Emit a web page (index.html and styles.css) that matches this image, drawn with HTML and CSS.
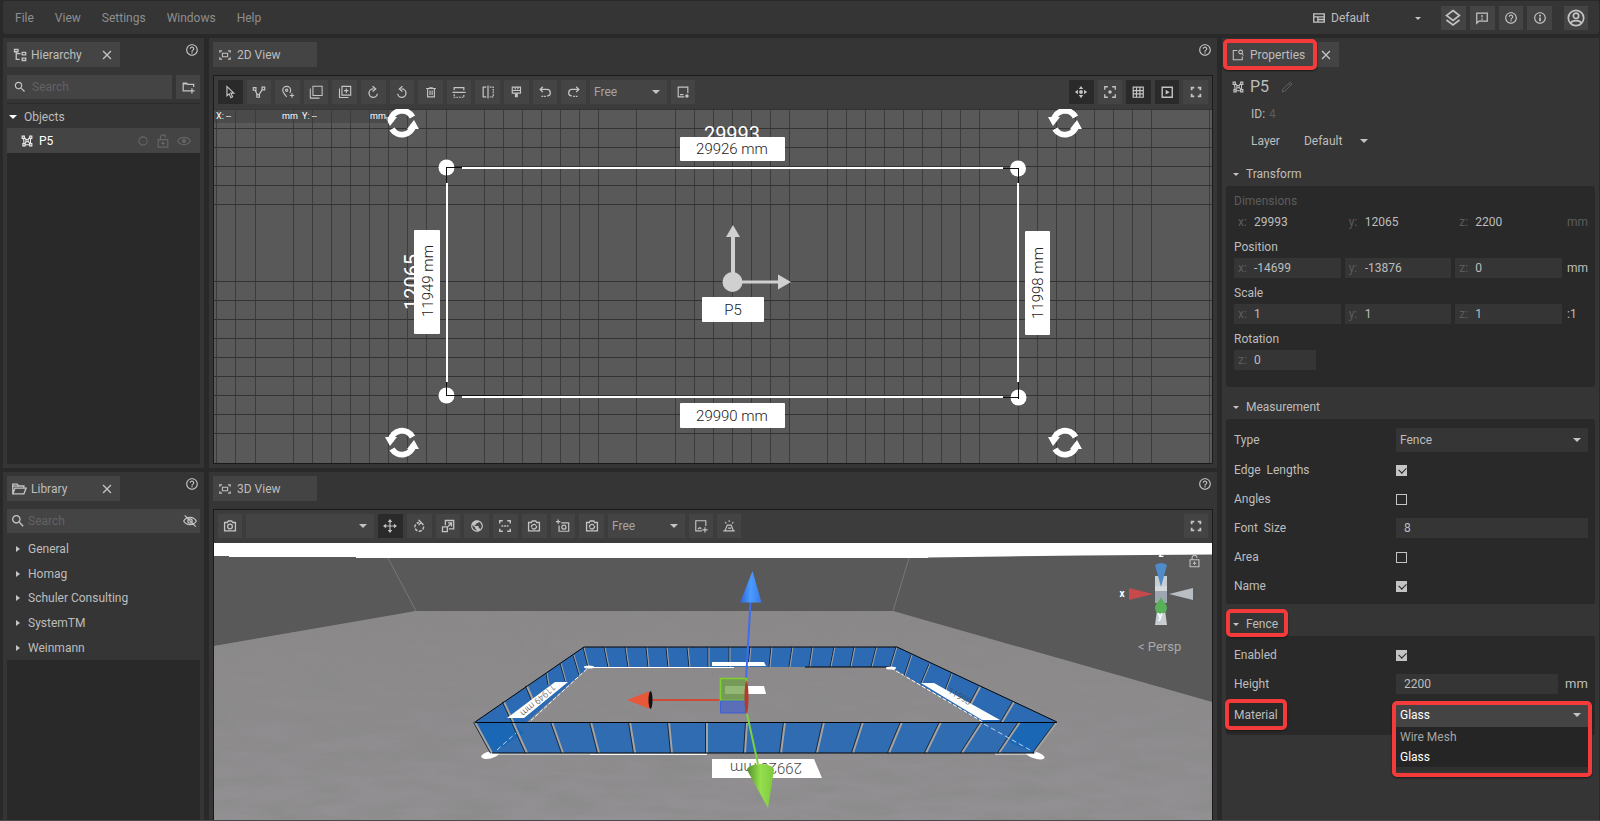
FILE: index.html
```html
<!DOCTYPE html>
<html lang="en">
<head>
<meta charset="utf-8">
<title>Layout Planner</title>
<link rel="stylesheet" href="styles.css">
</head>
<body>
<svg class="sprite" aria-hidden="true">
  <symbol id="i-help" viewBox="0 0 24 24"><path fill="currentColor" d="M11 18h2v-2h-2v2zm1-16C6.480 2 2 6.480 2 12s4.480 10 10 10 10-4.480 10-10S17.520 2 12 2zm0 18c-4.410 0-8-3.590-8-8s3.590-8 8-8 8 3.590 8 8-3.590 8-8 8zm0-14c-2.210 0-4 1.790-4 4h2c0-1.100.9-2 2-2s2 .9 2 2c0 2-3 1.750-3 5h2c0-2.250 3-2.500 3-5 0-2.210-1.790-4-4-4z"/></symbol>
  <symbol id="i-info" viewBox="0 0 24 24"><path fill="currentColor" d="M10.500 6.500h3v3h-3zm0 4.500h3v6.500h-3zM12 2C6.480 2 2 6.480 2 12s4.480 10 10 10 10-4.480 10-10S17.520 2 12 2zm0 18c-4.410 0-8-3.590-8-8s3.590-8 8-8 8 3.590 8 8-3.590 8-8 8z"/></symbol>
  <symbol id="i-search" viewBox="0 0 24 24"><path fill="currentColor" d="M15.500 14h-.79l-.28-.27C15.410 12.590 16 11.110 16 9.500 16 5.910 13.090 3 9.500 3S3 5.910 3 9.500 5.910 16 9.500 16c1.610 0 3.090-.59 4.230-1.570l.27.28v.79l5 4.990L20.490 19l-4.990-5zm-6 0C7.010 14 5 11.990 5 9.500S7.010 5 9.500 5 14 7.010 14 9.500 11.990 14 9.500 14z"/></symbol>
  <symbol id="i-globe" viewBox="0 0 24 24"><path fill="currentColor" d="M12 2C6.480 2 2 6.480 2 12s4.480 10 10 10 10-4.480 10-10S17.520 2 12 2zm-1 17.930c-3.950-.49-7-3.850-7-7.930 0-.62.08-1.210.21-1.790L9 15v1c0 1.100.9 2 2 2v1.930zm6.900-2.540c-.26-.81-1-1.390-1.900-1.390h-1v-3c0-.55-.45-1-1-1H8v-2h2c.55 0 1-.45 1-1V7h2c1.100 0 2-.9 2-2v-.41c2.930 1.190 5 4.060 5 7.410 0 2.080-.8 3.970-2.100 5.390z"/></symbol>
  <symbol id="i-full" viewBox="0 0 16 16"><path fill="none" stroke="currentColor" stroke-width="2" d="M3 6V3h3M10 3h3v3M13 10v3h-3M6 13H3v-3"/></symbol>
  <symbol id="i-close" viewBox="0 0 16 16"><path fill="none" stroke="currentColor" stroke-width="1.500" d="M3.500 3.500l9 9M12.500 3.500l-9 9"/></symbol>
  <symbol id="i-tree" viewBox="0 0 16 16"><g fill="none" stroke="currentColor" stroke-width="1.500"><path d="M1.700 1.700h4v2.600h-4zM10.500 5h4v2.800h-4zM10.500 11.500h4v2.800h-4zM3.700 4.500V13h4M3.700 6.500h5"/></g></symbol>
  <symbol id="i-view" viewBox="0 0 16 16"><g fill="none" stroke="currentColor" stroke-width="1.400"><path d="M1 5V2.500h3M12 2.500h3V5M15 11v2.500h-3M4 13.500H1V11M4.500 5.700h7v4.600h-7z"/></g></symbol>
  <symbol id="i-folder" viewBox="0 0 18 16"><path fill="none" stroke="currentColor" stroke-width="1.500" d="M2 13V2.500h5l1.500 2h6V7M2 13.500L4.500 7H17l-2.500 6.500zM2 4.700h12"/></symbol>
  <symbol id="i-addfolder" viewBox="0 0 16 16"><path fill="none" stroke="currentColor" stroke-width="1.400" d="M9.500 12.500H2.500V3.500h4l1 1.500h7V8M12.500 9.500v6M9.500 12.500h6M2.500 4.500h5"/></symbol>
  <symbol id="i-poly" viewBox="0 0 16 16"><g fill="none" stroke="currentColor" stroke-width="1.400"><path d="M1.500 1.500h3v3h-3zM11.500 1.500h3v3h-3zM2.500 11.500h3v3h-3zM11.500 11.500h3v3h-3zM6.500 6h3v3h-3zM3.500 4.500l.5 7M12.700 4.500v7M5.500 13h6M4.500 3.500l2.500 2.700M11.500 3.500L9 6.200M5 12l2-3M12 11.500L9.500 8.500"/></g></symbol>
  <symbol id="i-props" viewBox="0 0 16 16"><g fill="none" stroke="currentColor" stroke-width="1.400"><path d="M7 2H1.700v12.300h12V10"/><circle cx="11.500" cy="4" r="2.500"/><path d="M13 6l2.300 2.700"/></g></symbol>
  <symbol id="i-pencil" viewBox="0 0 16 16"><path fill="none" stroke="currentColor" stroke-width="1.200" d="M1.500 14.500l1-3.500L12 1.500 14.500 4 5 13.500zM10 3.500L12.500 6"/></symbol>
  <symbol id="i-circle" viewBox="0 0 16 16"><circle cx="8" cy="8" r="5.500" fill="none" stroke="currentColor" stroke-width="1.400"/></symbol>
  <symbol id="i-lock" viewBox="0 0 16 16"><path fill="none" stroke="currentColor" stroke-width="1.300" d="M2.500 6.500h11v8.500h-11zM5 6.500V4a3 3 0 016 0M8 8.700v4M6 10.700h4"/></symbol>
  <symbol id="i-eye" viewBox="0 0 16 16"><g fill="none" stroke="currentColor" stroke-width="1.200"><path d="M.7 8C4 2.500 12 2.500 15.300 8 12 13.500 4 13.500.7 8z"/></g><circle cx="8" cy="8" r="2.400" fill="currentColor"/></symbol>
  <symbol id="i-eyeoff" viewBox="0 0 16 16"><g fill="none" stroke="currentColor" stroke-width="1.400"><path d="M.8 8C4 2.500 12 2.500 15.200 8 12 13.500 4 13.500.8 8zM2 1.500l12.500 13"/><circle cx="8" cy="8" r="2.500"/></g></symbol>
  <symbol id="i-layout" viewBox="0 0 16 16"><path fill="none" stroke="currentColor" stroke-width="1.800" d="M1 2.500h14v11H1zM1 6.500h14M6.500 6.500v7M6.500 10h8.500"/></symbol>
  <symbol id="i-layers" viewBox="0 0 18 18"><path fill="none" stroke="currentColor" stroke-width="1.600" d="M9 1.500l6.500 5L9 11.500l-6.500-5zM2.500 11L9 16l6.500-5"/></symbol>
  <symbol id="i-note" viewBox="0 0 16 16"><path fill="none" stroke="currentColor" stroke-width="1.400" d="M2 14V2.500h12v9H4.500zM8 4.500v2.800M8 8.700v1.500"/></symbol>
  <symbol id="i-user" viewBox="0 0 18 18"><g fill="none" stroke="currentColor" stroke-width="1.700"><circle cx="9" cy="9" r="7.700"/><circle cx="9" cy="6.800" r="2.700"/><path d="M3.500 14c2-3.300 9-3.300 11 0"/></g></symbol>
  <symbol id="i-cursor" viewBox="0 0 16 16"><path fill="none" stroke="currentColor" stroke-width="1.300" d="M4.500 1.800v10.500l2.600-2.200 1.900 4.400 2-1-2-4.200h3.400z"/></symbol>
  <symbol id="i-nodes" viewBox="0 0 16 16"><path fill="none" stroke="currentColor" stroke-width="1.400" d="M1.500 3h3v3h-3zM11.500 2.500h3v3h-3zM5.500 11h3v3h-3zM3.700 6l2.300 5M11.700 5.300L8 11"/></symbol>
  <symbol id="i-pin" viewBox="0 0 16 16"><g fill="none" stroke="currentColor" stroke-width="1.300"><path d="M6.500 13.500C4 10.500 2 8.500 2 6a4.500 4.500 0 019 0c0 1-.4 2-1 3M12.500 9.500v5M10 12h5"/><circle cx="6.500" cy="6" r="1.300"/></g></symbol>
  <symbol id="i-copy" viewBox="0 0 16 16"><path fill="none" stroke="currentColor" stroke-width="1.200" d="M4.500 1.500h10.500v10.500H4.500zM1.500 4v11h10.500"/></symbol>
  <symbol id="i-copyadd" viewBox="0 0 16 16"><path fill="none" stroke="currentColor" stroke-width="1.300" d="M4.500 1.500h10v10h-10zM1.700 4v10.300H12M9.500 4v5M7 6.500h5"/></symbol>
  <symbol id="i-cw" viewBox="0 0 16 16"><path fill="none" stroke="currentColor" stroke-width="1.500" d="M8.500 4.500a4.800 4.800 0 104.500 5.500M7.500 1.500l3.500 3-3.500 3"/></symbol>
  <symbol id="i-ccw" viewBox="0 0 16 16"><path fill="none" stroke="currentColor" stroke-width="1.500" d="M7.500 4.500A4.800 4.800 0 113 10M8.500 1.500l-3.500 3 3.500 3"/></symbol>
  <symbol id="i-trash" viewBox="0 0 16 16"><path fill="none" stroke="currentColor" stroke-width="1.500" d="M1.500 3.300h13M5.500 2.500h5M3.500 3.500v11h9v-11M6.700 6v6M9.500 6v6"/></symbol>
  <symbol id="i-fliph" viewBox="0 0 16 16"><g fill="none" stroke="currentColor" stroke-width="1.400"><path d="M2.500 6V3h11v3M.5 8.300h15"/><path stroke-dasharray="2 1" d="M2.500 10.500v3.500h11v-3.500"/></g></symbol>
  <symbol id="i-flipv" viewBox="0 0 16 16"><g fill="none" stroke="currentColor" stroke-width="1.400"><path d="M6 2.500H2.500v11H6M8 .5v15"/><path stroke-dasharray="2 1" d="M10 2.500h4v11h-4"/></g></symbol>
  <symbol id="i-brush" viewBox="0 0 16 16"><path fill="none" stroke="currentColor" stroke-width="1.500" d="M3 1.500h11v8H3zM3 6h11M7 2v2.500M10.500 2v2.500"/><path fill="currentColor" d="M6.500 9.500h4V15h-4z"/></symbol>
  <symbol id="i-undo" viewBox="0 0 16 16"><g fill="none" stroke="currentColor" stroke-width="1.500"><path d="M5.500 2L2.500 5l3 3M2.500 5H10a3.700 3.700 0 01.5 7.500"/><path stroke-dasharray="2 1" d="M9 13H3"/></g></symbol>
  <symbol id="i-redo" viewBox="0 0 16 16"><g fill="none" stroke="currentColor" stroke-width="1.500"><path d="M10.500 2l3 3-3 3M13.500 5H6a3.700 3.700 0 00-.5 7.500"/><path stroke-dasharray="2 1" d="M7 13h6"/></g></symbol>
  <symbol id="i-snap" viewBox="0 0 16 16"><g fill="none" stroke="currentColor" stroke-width="1.300"><path d="M9.500 13.500h-7v-11h11v7M4.500 11h4"/></g><circle cx="12.500" cy="12.500" r="2" fill="currentColor"/></symbol>
  <symbol id="i-snapadd" viewBox="0 0 16 16"><path fill="none" stroke="currentColor" stroke-width="1.300" d="M9 13.500H2V2h11.500v6M4.500 11.500l2-1.500 2 1M12.500 9.500v6M9.500 12.500h6"/></symbol>
  <symbol id="i-move4" viewBox="0 0 16 16"><circle cx="8" cy="8" r="2.200" fill="currentColor"/><path fill="currentColor" d="M8 1l2.500 3.500h-5zM8 15l2.500-3.500h-5zM1 8l3.500-2.500v5zM15 8l-3.500-2.500v5z"/></symbol>
  <symbol id="i-focus" viewBox="0 0 16 16"><path fill="none" stroke="currentColor" stroke-width="1.500" d="M2 5.500V2h3.500M10.500 2H14v3.500M14 10.500V14h-3.500M5.500 14H2v-3.500"/><circle cx="8" cy="8" r="2" fill="currentColor"/></symbol>
  <symbol id="i-grid" viewBox="0 0 16 16"><path fill="none" stroke="currentColor" stroke-width="1.400" d="M2.500 2.500h11.500v11.500h-11.500zM6.300 2.500v11.500M10.200 2.500v11.500M2.500 6.300h11.500M2.500 10.200h11.500"/></symbol>
  <symbol id="i-play" viewBox="0 0 16 16"><path fill="none" stroke="currentColor" stroke-width="1.600" d="M2.500 2.500h11.500v11.500h-11.500z"/><path fill="currentColor" d="M6.500 5.500l4.500 2.700-4.500 2.700z"/></symbol>
  <symbol id="i-cam" viewBox="0 0 16 16"><g fill="none" stroke="currentColor" stroke-width="1.500"><path d="M1.800 4H5l1-1.700h4L11 4h3.200v9.500H1.800z"/><circle cx="8" cy="8.600" r="2.700"/></g></symbol>
  <symbol id="i-camrot" viewBox="0 0 16 16"><g fill="none" stroke="currentColor" stroke-width="1.500"><path d="M1.800 4H5l1-1.700h4L11 4h3.200v9.500H1.800zM5 9.500a3 3 0 015.500-2M11 8a3 3 0 01-5.500 2"/></g></symbol>
  <symbol id="i-camadd" viewBox="0 0 16 16"><g fill="none" stroke="currentColor" stroke-width="1.400"><path d="M6 4.500h8.500v9.500h-11V7.500M2.500 .5v5M0 3h5"/><circle cx="9" cy="9.300" r="2.300"/></g></symbol>
  <symbol id="i-move" viewBox="0 0 18 18"><path fill="none" stroke="currentColor" stroke-width="1.500" d="M9 2v14M2 9h14"/><path fill="currentColor" d="M9 0l3 4H6zM9 18l3-4H6zM0 9l4-3v6zM18 9l-4-3v6z"/></symbol>
  <symbol id="i-rot" viewBox="0 0 16 16"><g fill="none" stroke="currentColor" stroke-width="1.600"><path stroke-dasharray="3.500 1.500" d="M10.500 4.500A5 5 0 118 4"/><path d="M7.500 1l3 3-3 3"/></g></symbol>
  <symbol id="i-scale" viewBox="0 0 16 16"><path fill="none" stroke="currentColor" stroke-width="1.500" d="M5 7V1.700h9.500v9.500H9M1.700 9h5.500v5.500H1.700zM8 4.500h4v4M12 4.500L8 8.500"/></symbol>
  <symbol id="i-measure" viewBox="0 0 16 16"><path fill="none" stroke="currentColor" stroke-width="1.600" d="M2 5V2h3.500M10.500 2H14v3M14 11v3h-3.500M5.500 14H2v-3M4 8h2M7 8h2M10 8h2"/></symbol>
  <symbol id="i-lamp" viewBox="0 0 16 16"><path fill="none" stroke="currentColor" stroke-width="1.300" d="M1.500 13.500h13M3.500 13.500L6 7h4.500l2.500 6.500M7 10.500h3.500M8.200 1.500v2M3.500 3.500l1.500 1.500M13 3.500l-1.500 1.500"/></symbol>
  <symbol id="i-spin" viewBox="0 0 34 34"><g fill="none" stroke="#fff" stroke-width="6"><path d="M5.500 15A11.700 11.700 0 0127.500 11"/><path d="M28.500 19A11.700 11.700 0 017 23"/></g><path fill="#fff" d="M0 11h12l-7 9zM34 23H22l7-9z"/></symbol>
</svg>

<div class="app">
  <header class="menubar">
    <nav class="menus">
      <button type="button">File</button><button type="button">View</button><button type="button">Settings</button><button type="button">Windows</button><button type="button">Help</button>
    </nav>
    <div class="layout-pick">
      <svg class="ico s12"><use href="#i-layout"/></svg>
      <span class="select small-caret"><select aria-label="Layout"><option>Default</option></select></span>
    </div>
    <div class="group top-tools">
      <button type="button" class="tool" aria-label="Layers"><svg class="ico s18"><use href="#i-layers"/></svg></button>
      <button type="button" class="tool" aria-label="Feedback"><svg class="ico s14"><use href="#i-note"/></svg></button>
      <button type="button" class="tool" aria-label="Help"><svg class="ico s14"><use href="#i-help"/></svg></button>
      <button type="button" class="tool" aria-label="Info"><svg class="ico s14"><use href="#i-info"/></svg></button>
    </div>
    <button type="button" class="tool avatar" aria-label="Account"><svg class="ico s18"><use href="#i-user"/></svg></button>
  </header>

  <main class="columns">
    <div class="column">
      <section class="panel upper">
        <div class="panel-head">
          <div class="tab closable"><svg class="ico s14"><use href="#i-tree"/></svg><span>Hierarchy</span><button type="button" class="close" aria-label="Close"><svg class="ico s14"><use href="#i-close"/></svg></button></div>
          <button type="button" class="help" aria-label="Help"><svg class="ico s14"><use href="#i-help"/></svg></button>
        </div>
        <div class="search-row">
          <label class="search"><svg class="ico s14"><use href="#i-search"/></svg><input type="text" placeholder="Search" aria-label="Search hierarchy"></label>
          <button type="button" class="tool" aria-label="Add group"><svg class="ico s14"><use href="#i-addfolder"/></svg></button>
        </div>
        <div class="tree">
          <div class="tree-head"><i class="caret-down wide"></i><span>Objects</span></div>
          <div class="tree-row"><svg class="ico s12"><use href="#i-poly"/></svg><span>P5</span>
            <span class="row-tools"><svg class="ico s12"><use href="#i-circle"/></svg><svg class="ico s14"><use href="#i-lock"/></svg><svg class="ico s14"><use href="#i-eye"/></svg></span></div>
        </div>
      </section>
      <section class="panel lower">
        <div class="panel-head">
          <div class="tab closable folder"><svg class="ico s16"><use href="#i-folder"/></svg><span>Library</span><button type="button" class="close" aria-label="Close"><svg class="ico s14"><use href="#i-close"/></svg></button></div>
          <button type="button" class="help" aria-label="Help"><svg class="ico s14"><use href="#i-help"/></svg></button>
        </div>
        <label class="search tight"><svg class="ico s16"><use href="#i-search"/></svg><input type="text" placeholder="Search" aria-label="Search library"><svg class="ico s14"><use href="#i-eyeoff"/></svg></label>
        <ul class="library">
          <li><i class="caret-right"></i>General</li>
          <li><i class="caret-right"></i>Homag</li>
          <li><i class="caret-right"></i>Schuler Consulting</li>
          <li><i class="caret-right"></i>SystemTM</li>
          <li><i class="caret-right"></i>Weinmann</li>
        </ul>
        <div class="void"></div>
      </section>
    </div>

    <div class="column">
      <section class="panel upper">
        <div class="panel-head">
          <div class="tab"><svg class="ico s12"><use href="#i-view"/></svg><span>2D View</span></div>
          <button type="button" class="help" aria-label="Help"><svg class="ico s14"><use href="#i-help"/></svg></button>
        </div>
        <div class="viewport">
          <div class="toolbar">
            <div class="group g13">
              <button type="button" class="tool on" aria-label="Select"><svg class="ico s14"><use href="#i-cursor"/></svg></button>
              <button type="button" class="tool" aria-label="Polyline"><svg class="ico s14"><use href="#i-nodes"/></svg></button>
              <button type="button" class="tool" aria-label="Add pin"><svg class="ico s14"><use href="#i-pin"/></svg></button>
              <button type="button" class="tool" aria-label="Copy"><svg class="ico s14"><use href="#i-copy"/></svg></button>
              <button type="button" class="tool" aria-label="Duplicate"><svg class="ico s14"><use href="#i-copyadd"/></svg></button>
              <button type="button" class="tool" aria-label="Rotate right"><svg class="ico s14"><use href="#i-cw"/></svg></button>
              <button type="button" class="tool" aria-label="Rotate left"><svg class="ico s14"><use href="#i-ccw"/></svg></button>
              <button type="button" class="tool" aria-label="Delete"><svg class="ico s12"><use href="#i-trash"/></svg></button>
              <button type="button" class="tool" aria-label="Flip horizontal"><svg class="ico s14"><use href="#i-fliph"/></svg></button>
              <button type="button" class="tool" aria-label="Flip vertical"><svg class="ico s14"><use href="#i-flipv"/></svg></button>
              <button type="button" class="tool" aria-label="Paint format"><svg class="ico s12"><use href="#i-brush"/></svg></button>
              <button type="button" class="tool" aria-label="Undo"><svg class="ico s14"><use href="#i-undo"/></svg></button>
              <button type="button" class="tool" aria-label="Redo"><svg class="ico s14"><use href="#i-redo"/></svg></button>
            </div>
            <span class="select bar-select"><select aria-label="Snap mode"><option>Free</option></select></span>
            <button type="button" class="tool" aria-label="Snap settings"><svg class="ico s14"><use href="#i-snap"/></svg></button>
            <div class="group g5">
              <button type="button" class="tool on" aria-label="Pan"><svg class="ico s14"><use href="#i-move4"/></svg></button>
              <button type="button" class="tool" aria-label="Focus"><svg class="ico s14"><use href="#i-focus"/></svg></button>
              <button type="button" class="tool on" aria-label="Grid"><svg class="ico s14"><use href="#i-grid"/></svg></button>
              <button type="button" class="tool on" aria-label="Play"><svg class="ico s14"><use href="#i-play"/></svg></button>
              <button type="button" class="tool" aria-label="Full screen"><svg class="ico s14"><use href="#i-full"/></svg></button>
            </div>
          </div>
          <div class="stage">
            <svg class="scene" viewBox="214 109 998 354" preserveAspectRatio="xMidYMid slice">
              <path class="grid-v" d="M216.500 109V463M235.500 109V463M255.500 109V463M293.500 109V463M312.500 109V463M331.500 109V463M350.500 109V463M369.500 109V463M388.500 109V463M407.500 109V463M426.500 109V463M446.500 109V463M484.500 109V463M503.500 109V463M522.500 109V463M541.500 109V463M560.500 109V463M579.500 109V463M598.500 109V463M636.500 109V463M675.500 109V463M694.500 109V463M713.500 109V463M732.500 109V463M751.500 109V463M770.500 109V463M789.500 109V463M827.500 109V463M846.500 109V463M865.500 109V463M884.500 109V463M903.500 109V463M922.500 109V463M941.500 109V463M960.500 109V463M979.500 109V463M1018.500 109V463M1037.500 109V463M1056.500 109V463M1075.500 109V463M1094.500 109V463M1113.500 109V463M1132.500 109V463M1151.500 109V463M1209.500 109V463"/>
              <path class="grid-h" d="M214 109.500H1212M214 128.500H1212M214 147.500H1212M214 166.500H1212M214 185.500H1212M214 204.500H1212M214 281.500H1212M214 300.500H1212M214 319.500H1212M214 338.500H1212M214 357.500H1212M214 376.500H1212M214 395.500H1212M214 414.500H1212M214 433.500H1212"/>
              <path class="wall-line" d="M462 168H1003M462 397H1003M447 183V382M1018 183V382"/>
              <g fill="#fff"><circle cx="446.500" cy="167.500" r="8"/><circle cx="1018" cy="168.500" r="8"/><circle cx="446.500" cy="395.500" r="8"/><circle cx="1018.500" cy="397.500" r="8"/></g>
              <path class="wall-core" d="M446 167.500H462M446.500 167V183M1003 168.500H1018M1018.500 168V183M446 395.500H522M446.500 382V395M1003 397.500H1018M1018.500 382V399"/>
              <text class="dim-big" x="732" y="141">29993</text>
              <text class="dim-big" transform="translate(419 282) rotate(-90)">12065</text>
              <g class="plate"><rect x="680" y="137" width="105" height="24" rx="1"/><rect x="680" y="403" width="105" height="25" rx="1"/><rect x="702" y="297" width="62" height="25" rx="1"/><rect x="414" y="230" width="26" height="104" rx="1"/><rect x="1025" y="231" width="25" height="104" rx="1"/></g>
              <g class="dim"><text x="732" y="154">29926 mm</text><text x="732" y="421">29990 mm</text><text x="733" y="315">P5</text>
              <text transform="translate(433 281) rotate(-90)">11949 mm</text><text transform="translate(1043 283) rotate(-90)">11998 mm</text></g>
              <g fill="#d0d0d0"><circle cx="732.500" cy="282" r="10"/><path d="M731 282V237h-5l7-12 7 12h-5v45zM732 280.500h46v-6l13 7.500-13 7.500v-6h-46z"/></g>
              <use href="#i-spin" x="385" y="106" width="34" height="34"/><use href="#i-spin" x="385" y="426" width="34" height="34"/><use href="#i-spin" x="1048" y="106" width="34" height="34"/><use href="#i-spin" x="1048" y="426" width="34" height="34"/>
            </svg>
            <div class="coords"><span>X: --</span><span>mm</span><span>Y: --</span><span>mm</span></div>
          </div>
        </div>
      </section>

      <section class="panel lower">
        <div class="panel-head">
          <div class="tab"><svg class="ico s12"><use href="#i-view"/></svg><span>3D View</span></div>
          <button type="button" class="help" aria-label="Help"><svg class="ico s14"><use href="#i-help"/></svg></button>
        </div>
        <div class="viewport">
          <div class="toolbar">
            <button type="button" class="tool" aria-label="Camera"><svg class="ico s14"><use href="#i-cam"/></svg></button>
            <span class="select bar-select long"><select aria-label="Camera position"><option></option></select></span>
            <div class="group g8">
              <button type="button" class="tool on" aria-label="Move"><svg class="ico s14"><use href="#i-move"/></svg></button>
              <button type="button" class="tool" aria-label="Rotate"><svg class="ico s14"><use href="#i-rot"/></svg></button>
              <button type="button" class="tool" aria-label="Scale"><svg class="ico s14"><use href="#i-scale"/></svg></button>
              <button type="button" class="tool" aria-label="World space"><svg class="ico s14"><use href="#i-globe"/></svg></button>
              <button type="button" class="tool" aria-label="Measure"><svg class="ico s14"><use href="#i-measure"/></svg></button>
              <button type="button" class="tool" aria-label="Reset camera"><svg class="ico s14"><use href="#i-camrot"/></svg></button>
              <button type="button" class="tool" aria-label="Add camera"><svg class="ico s14"><use href="#i-camadd"/></svg></button>
              <button type="button" class="tool" aria-label="Switch camera"><svg class="ico s14"><use href="#i-camrot"/></svg></button>
            </div>
            <span class="select bar-select"><select aria-label="Snap mode 3D"><option>Free</option></select></span>
            <button type="button" class="tool" aria-label="Snap settings"><svg class="ico s14"><use href="#i-snapadd"/></svg></button>
            <button type="button" class="tool" aria-label="Light"><svg class="ico s14"><use href="#i-lamp"/></svg></button>
            <button type="button" class="tool last" aria-label="Full screen"><svg class="ico s14"><use href="#i-full"/></svg></button>
          </div>
          <div class="stage">
            <svg class="scene" viewBox="214 543 998 277" preserveAspectRatio="xMidYMid slice">
              <defs>
                <filter id="grain" x="0" y="0" width="100%" height="100%"><feTurbulence type="fractalNoise" baseFrequency="0.020 0.080" numOctaves="4" seed="7"/><feColorMatrix values="0 0 0 0 0.250  0 0 0 0 0.250  0 0 0 0 0.250  1.400 0 0 0 -0.500"/></filter>
                <linearGradient id="floor" x1="0" y1="0" x2="0" y2="1"><stop offset="0" stop-color="#8b888a"/><stop offset="1" stop-color="#929092"/></linearGradient>
                <linearGradient id="blueCone"><stop offset="0" stop-color="#2e63d8"/><stop offset=".5" stop-color="#4a9cff"/><stop offset="1" stop-color="#3a78e8"/></linearGradient>
                <linearGradient id="greenCone"><stop offset="0" stop-color="#548f2b"/><stop offset=".5" stop-color="#96e04e"/><stop offset="1" stop-color="#7cc83e"/></linearGradient>
                <clipPath id="ground"><path d="M214 646L416 611H893L1212 702V820H214z"/></clipPath>
              </defs>
              <path fill="#595959" d="M214 543h998v277H214z"/>
              <path fill="#fff" d="M214 543h998v11.500L1082 555.500 1005 556.500 928 557.500V558H356V557H229V556H214z"/>
              <path fill="none" stroke="#777" d="M388 558L416 611M909 558L893 611"/>
              <path fill="url(#floor)" d="M214 646L416 611H893L1212 702V820H214z"/>
              <g clip-path="url(#ground)"><rect x="214" y="611" width="998" height="209" filter="url(#grain)" opacity=".9"/></g>
              <g class="glass">
                <path d="M584 647H897L891 667H589z"/><path d="M475 722L584 647 589 667 492 753z"/><path d="M897 647L1057 722 1034 753 891 667z"/>
              </g>
              <path class="floor-line" d="M589 667.500H734M492 754H707M995 754H1034"/>
              <path class="floor-line dashed" d="M500 749L589 667M891 668L1034 752"/>
              <path class="post thin" d="M584 647L589 667M605 647L609 667M626 647L629 667M647 647L649 667M667 647L669 667M688 647L690 667M709 647V667M730 647V667M751 647L749 667M772 647L770 667M793 647L790 667M813 647L810 667M835 647L831 667M855 647L851 667M877 647L872 667M897 647L891 667M574 655L580 675M561 663L566 681M547 673L549 685M912 655L905 676M930 664L922 683M952 674L946 690"/>
              <path class="post" d="M504 702L524 745M527 686L533 700M980 687L971 704M1014 702L998 729"/>
              <path class="rail" d="M475 722L584 647H897L1057 722M805 667H891"/>
              <g fill="#fff"><path d="M555 682H568L524 718H507zM921 683H934L1000 720H982zM712 662H764L766 666H712zM725 686H764L766 694H725zM712 759H814L822 778H712z"/>
              <ellipse cx="490" cy="755" rx="9" ry="3.500" transform="rotate(-12 490 755)"/><ellipse cx="1035" cy="755" rx="10" ry="3.500" transform="rotate(18 1035 755)"/><ellipse cx="589" cy="667" rx="5" ry="1.500"/><ellipse cx="891" cy="668" rx="5" ry="1.500"/></g>
              <g class="ground-text"><text class="lg" transform="translate(766 763) rotate(180)">29926 mm</text><text transform="translate(536 698) rotate(139)">11949 mm</text><text transform="translate(958 699) rotate(30)">11998</text></g>
              <path class="glass front" d="M475 722.500H1057L1034 753H492z"/>
              <path class="corner" d="M475 722.500H513L524 733 492 753zM1020 722.500H1057L1034 753 1004 740z"/>
              <path class="post" d="M475 722L492 753M513 722L527 753M552 722L563 753M591 722L599 753M630 722L635 753M669 722L672 753M707 722V753M747 722L745 753M785 722L781 753M824 722L817 753M863 722L853 753M902 722L889 753M941 722L926 753M982 722L962 753M1020 722L999 753M1057 722L1034 753"/>
              <path class="rail" d="M475 722.500H1057M492 753H1034"/>
              <path stroke="#fff" d="M590 754.500H707" opacity=".9"/>
              <path stroke="#fff" stroke-dasharray="5 3" d="M497 750L516 733M984 724L1030 750" opacity=".7"/>
              <path stroke="#3f6cf0" stroke-width="2" d="M750.500 602L746 680"/><path fill="url(#blueCone)" d="M752.500 571L761.500 602.500H740z"/>
              <path stroke="#cf4b34" stroke-width="2" d="M651 700H720"/><path fill="#e9573a" d="M627 700L649 691.500V708.500z"/><ellipse cx="650.500" cy="700" rx="2" ry="9" fill="#111"/>
              <path fill="#6f9f46" fill-opacity=".75" stroke="#7fd12f" stroke-width="1.500" d="M720.500 678.500H746.500V700.500H720.500z"/><path fill="#5268c0" fill-opacity=".85" stroke="#3f5fd8" d="M720.500 701H746V713H720.500z"/>
              <ellipse cx="746.500" cy="697" rx="2" ry="16" fill="#b33b2c"/>
              <path stroke="#7fd13f" stroke-width="2" d="M747 714L758 764"/><path fill="url(#greenCone)" d="M747 770a13.500 6 0 0127 0L768 808z"/>
              <g class="axis"><path fill="#c7494c" d="M1129 588L1153 594 1129 600z"/><path fill="#b7bec4" d="M1193 588L1169 594 1193 600z"/><path fill="#c9ced3" d="M1155 576h12v10h-12zM1158 603h6l3 22h-12z"/><path fill="#9fa8b2" d="M1155 586h12v17h-12z"/><path fill="#d5d9dc" d="M1155 586h12v5h-12z"/><path fill="#4f8bc9" d="M1155 565q6-4 12 0L1161 587z"/><path fill="#58b158" d="M1161 597C1163 602 1167 604 1167 608a6 6 0 01-12 0C1155 604 1159 602 1161 597z"/>
              <text x="1122" y="597">x</text><text x="1160" y="619">y</text><text x="1161" y="557">z</text></g>
              <text class="persp" x="1138" y="651">&lt; Persp</text>
              <use href="#i-lock" class="lockpos" x="1188" y="554" width="13" height="14"/>
            </svg>
          </div>
        </div>
      </section>
    </div>

    <aside class="panel props">
      <div class="panel-head">
        <div class="tab closable"><svg class="ico s12"><use href="#i-props"/></svg><span>Properties</span><button type="button" class="close" aria-label="Close"><svg class="ico s14"><use href="#i-close"/></svg></button><i class="mark mark-tab"></i></div>
      </div>
      <div class="title"><svg class="ico s12"><use href="#i-poly"/></svg><h1>P5</h1><svg class="ico s12 dim-ico"><use href="#i-pencil"/></svg></div>
      <div class="meta">ID: <span class="muted">4</span></div>
      <div class="meta layer"><label for="layer">Layer</label><span class="select"><select id="layer"><option>Default</option></select></span></div>

      <section>
        <h2><i class="caret-down"></i>Transform</h2>
        <div class="box transform">
          <h3 class="muted">Dimensions</h3>
          <div class="triple flat"><label><span>x:</span><input value="29993" readonly></label><label><span>y:</span><input value="12065" readonly></label><label><span>z:</span><input value="2200" readonly></label><span class="muted">mm</span></div>
          <h3>Position</h3>
          <div class="triple"><label><span>x:</span><input value="-14699"></label><label><span>y:</span><input value="-13876"></label><label><span>z:</span><input value="0"></label><span>mm</span></div>
          <h3>Scale</h3>
          <div class="triple"><label><span>x:</span><input value="1"></label><label><span>y:</span><input value="1"></label><label><span>z:</span><input value="1"></label><span>:1</span></div>
          <h3>Rotation</h3>
          <div class="single"><label><span>z:</span><input value="0"></label></div>
        </div>
      </section>

      <section>
        <h2><i class="caret-down"></i>Measurement</h2>
        <div class="box rows">
          <div class="row first"><label for="type">Type</label><span class="select fill"><select id="type"><option>Fence</option></select></span></div>
          <div class="row"><label for="edge">Edge&nbsp; Lengths</label><input type="checkbox" id="edge" checked></div>
          <div class="row"><label for="angles">Angles</label><input type="checkbox" id="angles"></div>
          <div class="row"><label for="fsize">Font&nbsp; Size</label><input type="text" id="fsize" value="8"></div>
          <div class="row"><label for="area">Area</label><input type="checkbox" id="area"></div>
          <div class="row"><label for="name">Name</label><input type="checkbox" id="name" checked></div>
        </div>
      </section>

      <section>
        <h2><i class="caret-down"></i>Fence<i class="mark mark-head"></i></h2>
        <div class="box rows fence">
          <div class="row"><label for="enabled">Enabled</label><input type="checkbox" id="enabled" checked></div>
          <div class="row"><label for="height">Height</label><input type="text" id="height" value="2200"><span class="unit">mm</span></div>
          <div class="row material"><label for="material">Material</label><span class="select fill open"><select id="material"><option>Glass</option><option>Wire Mesh</option></select></span><i class="mark mark-label"></i>
            <ul class="popup"><li>Wire Mesh</li><li class="current">Glass</li></ul><i class="mark mark-drop"></i>
          </div>
        </div>
      </section>
    </aside>
  </main>
</div>
</body>
</html>
```
FILE: styles.css
```css
* { box-sizing: border-box; }
body { margin: 0; background: #292929; color: #bdbdbd; font: 12px/16px Roboto, "Liberation Sans", sans-serif; }
button, input, select { margin: 0; padding: 0; border: 0; border-radius: 0; background: none; color: inherit; font: inherit; outline: 0; min-width: 0; }
h1, h2, h3, ul { margin: 0; padding: 0; font-size: 12px; font-weight: 400; list-style: none; }
.sprite { position: absolute; width: 0; height: 0; }

.app { display: flex; flex-direction: column; gap: 4px; height: 100vh; padding: 1px 1px 0 3px; border-bottom: 1px solid #484848; }
.menubar { display: flex; align-items: center; flex: none; height: 33px; padding: 0 11px 0 12px; background: #353535; border-radius: 3px; }
.menus { display: flex; gap: 21px; color: #8e8e8e; }
.layout-pick { display: flex; align-items: center; gap: 6px; margin-left: auto; }
.layout-pick .select { width: 91px; }
.top-tools { width: 111px; margin-left: 19px; }
.avatar { margin-left: 12px; }

.ico { display: block; flex: none; color: #c4c4c4; overflow: visible; }
.s12 { width: 12px; height: 12px; }
.s14 { width: 14px; height: 14px; }
.s16 { width: 16px; height: 16px; }
.s18 { width: 18px; height: 18px; }

.group { display: flex; gap: 4px; }
.group .tool { flex: 1; }
.tool { display: flex; align-items: center; justify-content: center; width: 24px; height: 24px; flex: none; background: #444; }
.tool.on { background: #2a2a2a; }

.select { position: relative; display: block; }
.select select { display: block; width: 100%; height: 24px; appearance: none; }
.select::after { content: ""; position: absolute; right: 7px; top: 10px; border: 4px solid transparent; border-top-color: #c4c4c4; border-bottom: 0; pointer-events: none; }
.small-caret::after { border-width: 3px 3px 0; right: 1px; top: 11px; }
.caret-down { width: 0; height: 0; border: 3px solid transparent; border-top-color: #c4c4c4; border-bottom: 0; }
.caret-down.wide { border-width: 4px 4px 0; border-top-color: #fff; }
.caret-right { width: 0; height: 0; border: 3px solid transparent; border-left: 4px solid #c4c4c4; border-right: 0; }

.columns { display: grid; grid-template-columns: 201px 1fr 377px; gap: 5px; flex: 1; min-height: 0; }
.column { display: grid; grid-template-rows: 430fr 348fr; gap: 4px; min-height: 0; min-width: 0; }
.panel { display: flex; flex-direction: column; min-height: 0; min-width: 0; padding: 4px; background: #353535; }
.panel.lower { padding-bottom: 0; }
.panel-head { display: flex; justify-content: space-between; height: 25px; margin-bottom: 8px; flex: none; }
.tab { position: relative; display: flex; align-items: center; gap: 6px; width: 104px; padding-left: 6px; background: #444; }
.tab.closable { width: 113px; }
.tab .s14 { margin-right: -2px; }
.tab.folder { padding-left: 4px; gap: 4px; }
.close { display: flex; justify-content: center; width: 28px; margin-left: auto; }
.help { align-self: flex-start; padding: 1px; }

.search-row { display: flex; gap: 4px; margin-bottom: 4px; }
.search { display: flex; align-items: center; gap: 5px; flex: 1; min-width: 0; height: 24px; padding: 0 6px; background: #444; }
.search.tight { flex: none; gap: 2px; padding: 0 3px; }
.search input { flex: 1; }
.search input::placeholder { color: #626262; opacity: 1; }
.tree { flex: 1; background: #292929; border-top: 1px solid #2b2b2b; }
.tree-head { display: flex; align-items: center; gap: 7px; height: 24px; padding: 2px 0 0 2px; background: #353535; }
.tree-row { display: flex; align-items: center; gap: 6px; height: 25px; padding: 0 9px 0 14px; background: #444; color: #fff; }
.tree-row .ico { color: #eee; }
.row-tools { display: flex; align-items: center; gap: 7px; margin-left: auto; }
.tree-row .row-tools .ico { color: #666; }
.library { display: grid; grid-auto-rows: 1fr; flex: none; height: 127px; padding-top: 4px; }
.library li { display: flex; align-items: center; gap: 8px; padding-left: 9px; }
.void { flex: 1; background: #292929; }

.viewport { display: flex; flex-direction: column; flex: 1; min-height: 0; border: 1px solid #1a1a1a; }
.lower .viewport { border-bottom: 0; }
.toolbar { display: flex; align-items: flex-start; gap: 4px; flex: none; height: 33px; padding: 4px; background: #3c3c3c; }
.g13 { width: 368px; }
.g8 { width: 226px; }
.g5 { width: 139px; margin-left: auto; }
.tool.last { margin-left: auto; }
.bar-select { width: 77px; height: 24px; background: #444; color: #a5a5a5; }
.bar-select select { padding-left: 4px; }
.bar-select.long { width: 128px; }
.stage { position: relative; flex: 1; min-height: 0; background: #595959; }
.scene { display: block; width: 100%; height: 100%; }
.coords { position: absolute; left: 0; top: 0; display: grid; grid-template-columns: 66px 20px 68px 18px; padding-left: 2px; background: rgba(60, 60, 60, .5); color: #fff; font-size: 9px; line-height: 14px; }

.grid-v, .grid-h { fill: none; stroke: #3c3c3c; shape-rendering: crispEdges; }
.grid-h { stroke: #333; }
.wall-line { fill: none; stroke: #fff; stroke-width: 2; }
.wall-core { fill: none; stroke: #111; }
.plate { fill: #fff; }
.dim, .dim-big { text-anchor: middle; font-weight: 300; }
.dim { fill: #222; font-size: 15px; }
.dim-big { fill: #fff; font-size: 20px; font-weight: 400; }
.glass { fill: #2c6bb3; }
.glass.front { fill: #2f6cb2; }
.corner { fill: #1a67b6; }
.post { fill: none; stroke: #a3a3a3; stroke-width: 2; filter: drop-shadow(-1px 0 #1b2836); }
.post.thin { stroke-width: 1; }
.rail { fill: none; stroke: #050505; stroke-width: 1; }
.floor-line { fill: none; stroke: #fff; stroke-width: 1; }
.floor-line.dashed { stroke-dasharray: 4 2; }
.ground-text { fill: #444; font-size: 9px; text-anchor: middle; font-weight: 300; }
.ground-text .lg { font-size: 15px; }
.axis text { fill: #fff; font-size: 10px; font-weight: 700; text-anchor: middle; }
.persp { fill: #a9a9a9; font-size: 13px; }
.lockpos { color: #c4c4c4; }

.props { position: relative; }
.title { display: flex; align-items: center; gap: 6px; height: 24px; padding-left: 6px; flex: none; }
.title h1 { font-size: 16px; line-height: 24px; }
.title .dim-ico { margin-left: 6px; color: #666; }
.muted { color: #5c5c5c; }
.meta { display: flex; gap: 4px; height: 24px; margin-top: 3px; padding-left: 25px; line-height: 24px; flex: none; }
.layer { gap: 24px; margin-bottom: 9px; }
.layer .select { width: 71px; }
section h2 { position: relative; display: flex; align-items: center; gap: 7px; height: 24px; padding-left: 7px; }
.box { margin-bottom: 8px; padding: 5px 8px; background: #292929; border-radius: 3px; }
.transform { padding-bottom: 17px; }
.transform h3 { height: 21px; line-height: 20px; }
.triple { display: grid; grid-template-columns: repeat(3, minmax(0, 1fr)) 21px; gap: 4px; margin-bottom: 5px; line-height: 20px; }
.triple > span { padding-left: 1px; }
.triple label, .single label { display: flex; gap: 6px; height: 20px; min-width: 0; padding-left: 4px; background: #353535; line-height: 20px; }
.triple label > span, .single label > span { flex: none; width: 10px; color: #5c5c5c; }
.triple input, .single input { flex: 1; }
.triple.flat label { background: none; }
.single label { width: 82px; }

.rows { display: flex; flex-direction: column; gap: 5px; padding: 6px 7px 6px 8px; }
.rows.fence { padding: 7px 7px 8px 8px; }
.row { position: relative; display: grid; grid-template-columns: 162px 1fr; align-items: center; height: 24px; }
.row.first { margin: 3px 0 1px; }
.row.material { margin-top: 2px; }
.row input[type="text"] { height: 20px; padding-left: 8px; background: #353535; }
.row:has(.unit) { grid-template-columns: 162px 1fr 30px; }
.unit { padding-left: 7px; font-size: 13px; }
.row input[type="checkbox"] { appearance: none; position: relative; width: 11px; height: 11px; border: 1px solid #c4c4c4; }
.row input:checked { background: #c4c4c4; }
.row input:checked::after { content: ""; position: absolute; left: 2px; top: 1px; width: 6px; height: 4px; border: solid #222; border-width: 0 0 1px 1px; transform: rotate(-45deg); }
.fill { background: #353535; }
.fill select { padding-left: 4px; }
.open { background: #444; color: #fff; }
.popup { position: absolute; left: 162px; right: 0; top: 24px; background: #252525; box-shadow: 0 4px #303030; color: #a5a5a5; }
.popup li { height: 20px; padding-left: 4px; line-height: 20px; }
.popup .current { color: #fff; }

.mark { position: absolute; border: 4px solid #f33b3b; border-radius: 5px; box-shadow: 0 1px 2px #1a1a1a; pointer-events: none; }
.mark-tab { left: -3px; right: 22px; top: -3px; bottom: -3px; }
.mark-head { left: 0; width: 62px; top: -3px; bottom: -1px; }
.mark-label { left: -9px; width: 62px; top: -4px; bottom: -3px; }
.mark-drop { left: 158px; right: -4px; top: -2px; height: 76px; }
```
